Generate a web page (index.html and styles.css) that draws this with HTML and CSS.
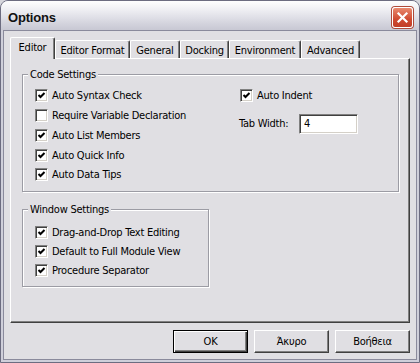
FILE: index.html
```html
<!DOCTYPE html>
<html>
<head>
  <title>Options</title>
  <link rel="stylesheet" href="styles.css">
</head>
<body>
  <div class="window">
    <div class="titlebar">
      <span class="title">Options</span>
      <span class="close">
        <svg width="19" height="19" viewBox="0 0 19 19"><path d="M5.5 5.5 L13.5 13.5 M13.5 5.5 L5.5 13.5" stroke="#fff" stroke-width="2.2" stroke-linecap="square" fill="none"/></svg>
      </span>
    </div>
    <div class="client">
      <div class="tabs">
        <div class="tab active" style="width:45px">Editor</div>
        <div class="tab" style="width:75px">Editor Format</div>
        <div class="tab" style="width:50px">General</div>
        <div class="tab" style="width:49px">Docking</div>
        <div class="tab" style="width:72px">Environment</div>
        <div class="tab" style="width:59px">Advanced</div>
      </div>
      <div class="panel">
        <div class="group code">
          <div class="groupTitle">Code Settings</div>
          <div class="groupBody">
            <div class="col left">
              <div class="row"><span class="check on"></span>Auto Syntax Check</div>
              <div class="row"><span class="check"></span>Require Variable Declaration</div>
              <div class="row"><span class="check on"></span>Auto List Members</div>
              <div class="row"><span class="check on"></span>Auto Quick Info</div>
              <div class="row"><span class="check on"></span>Auto Data Tips</div>
            </div>
            <div class="col right">
              <div class="row indent"><span class="check on"></span>Auto Indent</div>
              <div class="field"><span class="fieldLabel">Tab Width:</span><span class="input">4</span></div>
            </div>
          </div>
        </div>
        <div class="group win">
          <div class="groupTitle">Window Settings</div>
          <div class="groupBody">
            <div class="col left">
              <div class="row"><span class="check on"></span>Drag-and-Drop Text Editing</div>
              <div class="row"><span class="check on"></span>Default to Full Module View</div>
              <div class="row"><span class="check on"></span>Procedure Separator</div>
            </div>
          </div>
        </div>
      </div>
      <div class="buttons">
        <div class="button default">OK</div>
        <div class="button">Άκυρο</div>
        <div class="button">Βοήθεια</div>
      </div>
    </div>
  </div>
</body>
</html>
```
FILE: styles.css
```css
body {
  margin: 0;
  background-color: #d6d6dc;
  font-family: "DejaVu Sans Condensed", "Liberation Sans", Arial, sans-serif;
  font-size: 11px;
  letter-spacing: -0.25px;
  color: #000;
}
.window {
  width: 420px;
  height: 363px;
  box-sizing: border-box;
  border: 1px solid #6c6c80;
  border-radius: 8px 8px 0 0;
  background-color: #cfcfda;
  padding: 0 2px 2px;
  display: flex;
  flex-direction: column;
  overflow: hidden;
}
.titlebar {
  height: 29px;
  box-sizing: border-box;
  margin: 0 -2px;
  padding: 3px 6px 0 7px;
  display: flex;
  align-items: center;
  justify-content: space-between;
  background: linear-gradient(#fefefe, #ececf1 35%, #d2d2dc 80%, #c8c8d3);
}
.title {
  font-family: "Liberation Sans", Arial, sans-serif;
  font-weight: bold;
  font-size: 13px;
  letter-spacing: -0.2px;
  color: #111;
}
.close {
  width: 19px;
  height: 19px;
  border: 1px solid #fff;
  border-radius: 3px;
  background: linear-gradient(#e98a6f, #cf4a31 60%, #c13d27);
  box-shadow: 0 0 0 1px #b04a3a;
  display: flex;
}
.client {
  flex-grow: 1;
  border: 1px solid #8a8a9c;
  background-color: #e0dfe3;
  padding: 6px 6px 0 6px;
}
.tabs {
  display: flex;
  align-items: flex-end;
  height: 21px;
}
.tab {
  height: 18px;
  box-sizing: border-box;
  border-top: 1px solid #fff;
  border-left: 1px solid #fff;
  border-right: 1px solid #404040;
  box-shadow: inset -1px 0 0 #808080;
  border-radius: 2px 2px 0 0;
  display: flex;
  align-items: center;
  justify-content: center;
  padding-top: 1px;
  white-space: nowrap;
}
.tab.active {
  height: 22px;
  margin-bottom: -1px;
  background-color: #e0dfe3;
  position: relative;
  padding-top: 0;
  padding-bottom: 2px;
}
.panel {
  width: 400px;
  height: 265px;
  box-sizing: border-box;
  border: 1px solid;
  border-color: #fff #404040 #404040 #fff;
  box-shadow: inset -1px -1px 0 #808080;
  padding: 15px 10px 0 11px;
}
.group {
  box-sizing: border-box;
  border: 1px solid #9c9ca4;
  box-shadow: 1px 1px 0 #fff, inset 1px 1px 0 #fff;
}
.group.code {
  height: 118px;
}
.group.win {
  width: 187px;
  height: 78px;
  margin-top: 17px;
}
.groupTitle {
  display: table;
  margin: -7px 0 0 5px;
  padding: 0 2px;
  height: 13px;
  line-height: 13px;
  background-color: #e0dfe3;
}
.groupBody {
  display: flex;
  padding-top: 5px;
}
.win .groupBody {
  padding-top: 7px;
}
.col.left {
  width: 204px;
  padding-left: 12px;
}
.row {
  height: 19.75px;
  display: flex;
  align-items: center;
  white-space: nowrap;
}
.win .row {
  height: 19px;
}
.row.indent {
  padding-left: 1px;
}
.check {
  width: 13px;
  height: 13px;
  box-sizing: border-box;
  margin-right: 4px;
  border: 1px solid;
  border-color: #808080 #fff #fff #808080;
  box-shadow: inset 1px 1px 0 #404040, inset -1px -1px 0 #d4d0c8;
  background-color: #fff;
}
.check.on {
  background-image: url("data:image/svg+xml,%3Csvg xmlns='http://www.w3.org/2000/svg' width='11' height='11'%3E%3Cpath d='M2.5 5 L4.5 7 L8.5 3' stroke='%23000' stroke-width='2' fill='none'/%3E%3C/svg%3E");
  background-repeat: no-repeat;
}
.field {
  display: flex;
  align-items: center;
  height: 20px;
  margin-top: 8px;
}
.fieldLabel {
  width: 60px;
}
.input {
  width: 59px;
  height: 20px;
  box-sizing: border-box;
  border: 1px solid;
  border-color: #808080 #fff #fff #808080;
  box-shadow: inset 1px 1px 0 #404040, inset -1px -1px 0 #d4d0c8;
  background-color: #fff;
  padding: 0 4px;
  line-height: 18px;
}
.buttons {
  display: flex;
  justify-content: flex-end;
  gap: 6px;
  margin-top: 7px;
}
.button {
  width: 75px;
  height: 23px;
  box-sizing: border-box;
  border: 1px solid;
  border-color: #fff #404040 #404040 #fff;
  box-shadow: inset -1px -1px 0 #808080;
  display: flex;
  align-items: center;
  justify-content: center;
}
.button.default {
  border: 1px solid #000;
  box-shadow: inset 1px 1px 0 #fff, inset -1px -1px 0 #404040, inset -2px -2px 0 #808080;
}
```
